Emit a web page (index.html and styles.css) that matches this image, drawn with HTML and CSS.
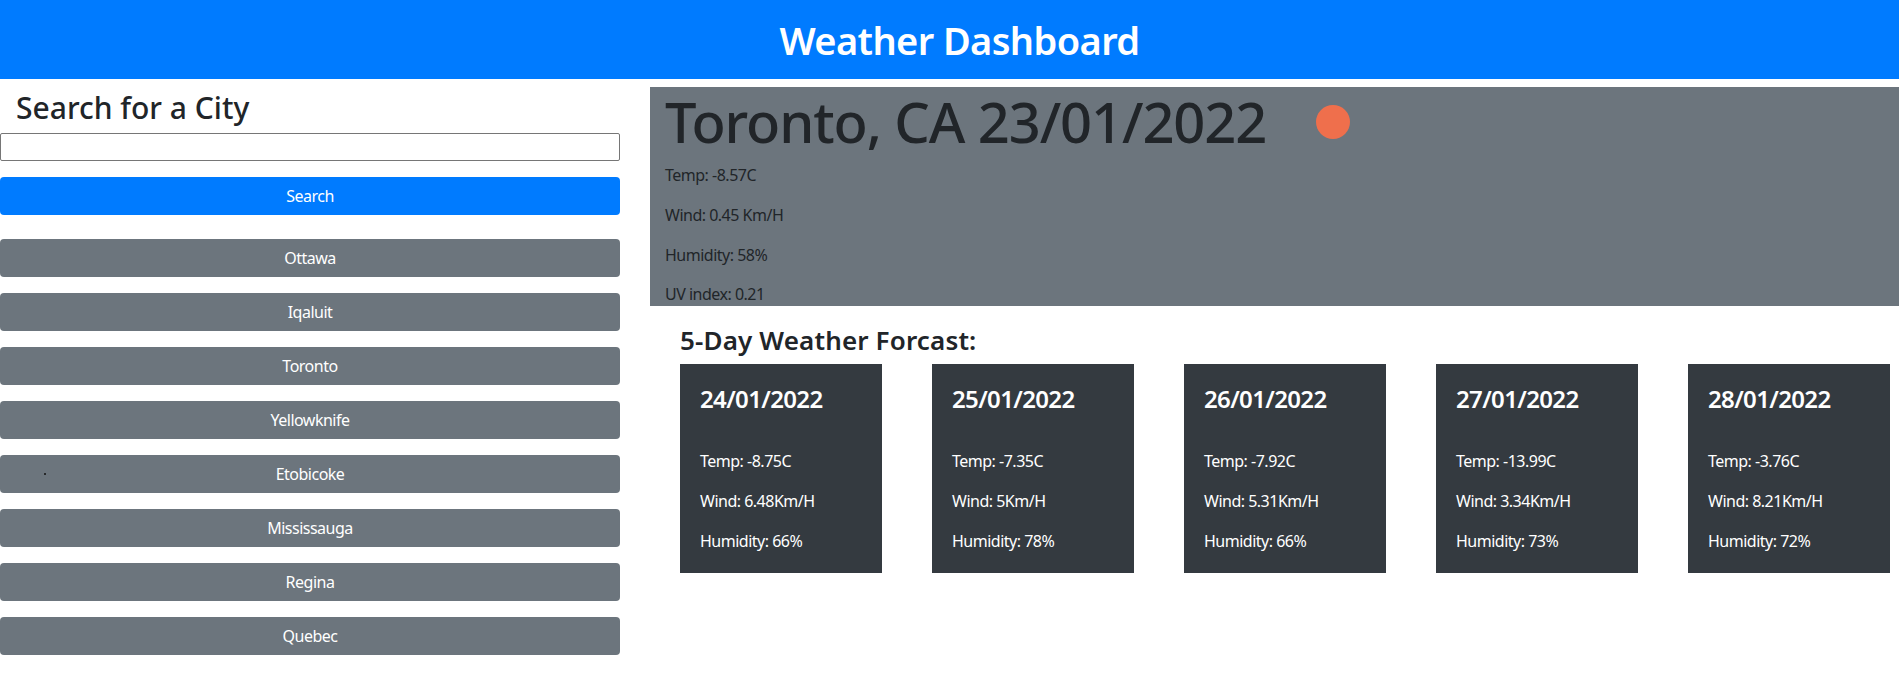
FILE: index.html
```html
<!DOCTYPE html>
<html lang="en">
<head>
<meta charset="utf-8">
<title>Weather Dashboard</title>
<link rel="stylesheet" href="styles.css">
</head>
<body>
<header class="top"><h1 class="top-title">Weather Dashboard</h1></header>
<main class="layout">
  <aside class="side">
    <h3 class="side-title">Search for a City</h3>
    <input class="search-input" type="text" aria-label="City">
    <button class="btn btn-primary search-btn">Search</button>
    <div class="cities">
      <button class="btn btn-grey">Ottawa</button>
      <button class="btn btn-grey">Iqaluit</button>
      <button class="btn btn-grey">Toronto</button>
      <button class="btn btn-grey">Yellowknife</button>
      <button class="btn btn-grey">Etobicoke<span class="speck"></span></button>
      <button class="btn btn-grey">Mississauga</button>
      <button class="btn btn-grey">Regina</button>
      <button class="btn btn-grey">Quebec</button>
    </div>
  </aside>
  <section class="content">
    <div class="current">
      <div class="current-head">
        <h1 class="current-title">Toronto, CA 23/01/2022</h1>
        <svg class="weather-icon" viewBox="0 0 34 34" aria-hidden="true"><circle cx="17" cy="17" r="17" fill="#ef6f4c"/></svg>
      </div>
      <p class="current-line">Temp: -8.57C</p>
      <p class="current-line">Wind: 0.45 Km/H</p>
      <p class="current-line">Humidity: 58%</p>
      <p class="current-line">UV index: 0.21</p>
    </div>
    <div class="forecast">
      <h4 class="forecast-title">5-Day Weather Forcast:</h4>
      <div class="cards">
        <article class="card"><h4 class="card-date">24/01/2022</h4><p class="card-line">Temp: -8.75C</p><p class="card-line">Wind: 6.48Km/H</p><p class="card-line">Humidity: 66%</p></article>
        <article class="card"><h4 class="card-date">25/01/2022</h4><p class="card-line">Temp: -7.35C</p><p class="card-line">Wind: 5Km/H</p><p class="card-line">Humidity: 78%</p></article>
        <article class="card"><h4 class="card-date">26/01/2022</h4><p class="card-line">Temp: -7.92C</p><p class="card-line">Wind: 5.31Km/H</p><p class="card-line">Humidity: 66%</p></article>
        <article class="card"><h4 class="card-date">27/01/2022</h4><p class="card-line">Temp: -13.99C</p><p class="card-line">Wind: 3.34Km/H</p><p class="card-line">Humidity: 73%</p></article>
        <article class="card"><h4 class="card-date">28/01/2022</h4><p class="card-line">Temp: -3.76C</p><p class="card-line">Wind: 8.21Km/H</p><p class="card-line">Humidity: 72%</p></article>
      </div>
    </div>
  </section>
</main>
</body>
</html>
```
FILE: styles.css
```css
* { box-sizing: border-box; }
html, body { margin: 0; padding: 0; }
body {
  font-family: "Noto Sans", "Open Sans", sans-serif;
  font-size: 16px;
  line-height: 24px;
  color: #212529;
  background: #fff;
  letter-spacing: -0.5px;
}
h1, h3, h4, p { margin: 0; }

.top {
  height: 79px;
  background: #007bff;
  display: flex;
  align-items: center;
  justify-content: center;
  padding-left: 20px;
}
.top-title {
  font-size: 38px;
  line-height: 48px;
  font-weight: 600;
  color: #fff;
  letter-spacing: -0.6px;
}

.layout { display: flex; gap: 30px; }

.side { width: 620px; flex: none; padding-top: 10px; }
.side-title {
  font-size: 30px;
  line-height: 38px;
  font-weight: 500;
  padding-left: 16px;
  margin-bottom: 6px;
  letter-spacing: 0;
}
.search-input {
  display: block;
  width: 100%;
  height: 28px;
  border: 1px solid #767676;
  border-radius: 2px;
  background: #fff;
  margin-bottom: 16px;
}
.btn {
  display: block;
  position: relative;
  width: 100%;
  height: 38px;
  border: 0;
  border-radius: 4px;
  color: #fff;
  font: inherit;
  letter-spacing: inherit;
  text-align: center;
  padding: 0;
}
.btn-primary { background: #007bff; }
.btn-grey { background: #6c757d; }
.cities { display: flex; flex-direction: column; gap: 16px; margin-top: 24px; }
.speck {
  position: absolute;
  left: 44px;
  top: 18px;
  width: 2px;
  height: 2px;
  border-radius: 50%;
  background: #111;
}

.content { flex: 1; min-width: 0; padding-top: 8px; }
.current {
  height: 219px;
  background: #6c757d;
  padding: 1px 15px 0;
}
.current-head { display: flex; align-items: center; gap: 50px; margin-bottom: 8px; height: 67px; }
.current-title {
  font-size: 56px;
  line-height: 67px;
  font-weight: 500;
  letter-spacing: -1.1px;
}
.weather-icon { width: 34px; height: 34px; flex: none; }
.current-line { margin-bottom: 16px; }
.current-line:last-child { margin-bottom: 0; line-height: 23px; }

.forecast { padding: 20px 0 0 30px; }
.forecast-title {
  font-size: 26px;
  line-height: 29px;
  font-weight: 600;
  margin-bottom: 9px;
  letter-spacing: 0.15px;
}
.cards { display: flex; gap: 50px; }
.card {
  width: 202px;
  height: 209px;
  background: #343a40;
  color: #fff;
  padding: 20px;
}
.card-date {
  font-size: 24px;
  line-height: 29px;
  font-weight: 600;
  margin-bottom: 36px;
  letter-spacing: -0.65px;
}
.card-line { margin-bottom: 16px; }
.card-line:last-child { margin-bottom: 0; }
```
